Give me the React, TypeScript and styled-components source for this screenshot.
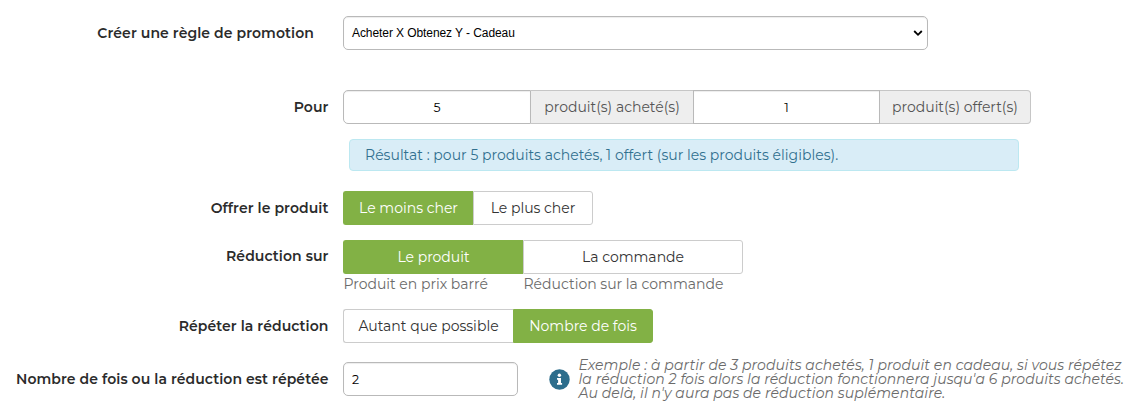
import React from 'react';
import styled, { createGlobalStyle, css } from 'styled-components';

const GlobalStyle = createGlobalStyle`
  *, *::before, *::after { box-sizing: border-box; }
  body {
    margin: 0;
    background: #fff;
    color: #333;
    font: 14px/20px Montserrat, Inter, sans-serif;
  }
`;

const Form = styled.form`
  display: flex;
  flex-direction: column;
  gap: 15px;
  width: 1134px;
  min-height: 411px;
  padding-top: 16px;
`;

const Row = styled.div<{ $after?: number }>`
  display: flex;
  align-items: flex-start;
  margin-bottom: ${(p) => p.$after ?? 0}px;
`;

const Label = styled.label<{ $inset?: number; $lift?: number }>`
  flex: none;
  width: 343px;
  padding: ${(p) => 7 - (p.$lift ?? 0)}px ${(p) => p.$inset ?? 14.5}px 0 0;
  color: #2b2b2b;
  font-weight: 600;
  letter-spacing: 0.08px;
  text-align: right;
  white-space: nowrap;
`;

const Line = styled.span`
  white-space: nowrap;
`;

const fieldFrame = css`
  height: 34px;
  border: 1px solid #b9b9b9;
  border-radius: 5px;
  background: #fff;
  color: #000;
  box-shadow: inset 0 1px 1px rgba(0, 0, 0, 0.075);
`;

const SelectBox = styled.div`
  ${fieldFrame}
  display: flex;
  align-items: center;
  justify-content: space-between;
  width: 585px;
  padding: 0 4px 1px 8px;
  font: 12px/16px 'Liberation Sans', Arial, sans-serif;
  letter-spacing: -0.08px;
`;

const Input = styled.input<{ $width: number; $joined?: 'left' | 'both' }>`
  ${fieldFrame}
  width: ${(p) => p.$width}px;
  padding: 1px 8px 0;
  font: 12.5px/18px Montserrat, Inter, sans-serif;
  outline: none;
  ${(p) => p.$joined && css`text-align: center; border-radius: ${p.$joined === 'left' ? '5px 0 0 5px' : '0'};`}
`;

const InputGroup = styled.div`
  display: flex;
  width: 688px;
`;

const Addon = styled.span<{ $width: number; $last?: boolean }>`
  display: flex;
  align-items: center;
  justify-content: center;
  width: ${(p) => p.$width}px;
  height: 34px;
  border: 1px solid #c6c6c6;
  border-width: ${(p) => (p.$last ? '1px 1px 1px 0' : '1px 0')};
  border-radius: ${(p) => (p.$last ? '0 4px 4px 0' : '0')};
  background: #eee;
  color: #555;
`;

const Alert = styled.div`
  display: flex;
  align-items: center;
  width: 670px;
  height: 32px;
  margin: 0 0 5px 349px;
  padding: 0 15px;
  border: 1px solid #bce8f1;
  border-radius: 4px;
  background: #d9edf7;
  color: #31708f;
  letter-spacing: 0.02px;
`;

const Toggle = styled.div`
  display: flex;
`;

const Option = styled.button<{ $width: number; $active?: boolean }>`
  width: ${(p) => p.$width}px;
  height: 34px;
  padding: 0;
  border: 1px solid ${(p) => (p.$active ? '#82b145' : '#ccc')};
  background: ${(p) => (p.$active ? '#82b145' : '#fff')};
  color: ${(p) => (p.$active ? '#fff' : '#333')};
  font: inherit;
  &:first-child { border-radius: 3px 0 0 3px; border-right-width: 0; }
  &:last-child { border-radius: 0 3px 3px 0; }
`;

const Hints = styled.div`
  display: grid;
  grid-template-columns: 180px 220px;
  padding-left: 0.5px;
  color: #6b6b6b;
`;

const Example = styled.div`
  display: flex;
  align-items: center;
  gap: 9px;
  height: 34px;
  margin-left: 30.5px;
`;

const ExampleText = styled.p`
  display: flex;
  flex-direction: column;
  margin: 0;
  color: #6b6b6b;
  font-style: italic;
  line-height: 14px;
  letter-spacing: 0.08px;
`;

const Chevron = () => (
  <svg width="10" height="8" viewBox="0 0 10 8" fill="none" stroke="#000" strokeWidth="1.8">
    <path d="M1.2 2 5 5.8 8.8 2" />
  </svg>
);

const InfoIcon = () => (
  <svg width="21" height="21" viewBox="0 0 21 21">
    <circle cx="10.5" cy="10.5" r="10.2" fill="#2c6d8c" />
    <circle cx="10.4" cy="6.2" r="1.7" fill="#fff" />
    <path d="M8 9h4v5h1.1v1.8H8V14h1.1v-3.2H8z" fill="#fff" />
  </svg>
);

export default function App() {
  return (
    <>
      <GlobalStyle />
      <Form>
        <Row $after={25}>
          <Label $inset={29}>Créer une règle de promotion</Label>
          <SelectBox>
            <Line>Acheter X Obtenez Y - Cadeau</Line>
            <Chevron />
          </SelectBox>
        </Row>
        <Row>
          <Label>Pour</Label>
          <InputGroup>
            <Input $width={188} $joined="left" defaultValue="5" />
            <Addon $width={162}><Line>produit(s) acheté(s)</Line></Addon>
            <Input $width={187} $joined="both" defaultValue="1" />
            <Addon $width={151} $last><Line>produit(s) offert(s)</Line></Addon>
          </InputGroup>
        </Row>
        <Alert>
          <Line>Résultat : pour 5 produits achetés, 1 offert (sur les produits éligibles).</Line>
        </Alert>
        <Row>
          <Label>Offrer le produit</Label>
          <Toggle>
            <Option type="button" $width={130} $active>Le moins cher</Option>
            <Option type="button" $width={120}>Le plus cher</Option>
          </Toggle>
        </Row>
        <Row>
          <Label $lift={1}>Réduction sur</Label>
          <div>
            <Toggle>
              <Option type="button" $width={180} $active>Le produit</Option>
              <Option type="button" $width={220}>La commande</Option>
            </Toggle>
            <Hints>
              <Line>Produit en prix barré</Line>
              <Line>Réduction sur la commande</Line>
            </Hints>
          </div>
        </Row>
        <Row $after={4}>
          <Label>Répéter la réduction</Label>
          <Toggle>
            <Option type="button" $width={170}>Autant que possible</Option>
            <Option type="button" $width={140} $active>Nombre de fois</Option>
          </Toggle>
        </Row>
        <Row>
          <Label>Nombre de fois ou la réduction est répétée</Label>
          <Input $width={175} defaultValue="2" />
          <Example>
            <InfoIcon />
            <ExampleText>
              <Line>Exemple : à partir de 3 produits achetés, 1 produit en cadeau, si vous répétez</Line>
              <Line>la réduction 2 fois alors la réduction fonctionnera jusqu'a 6 produits achetés.</Line>
              <Line>Au delà, il n'y aura pas de réduction suplémentaire.</Line>
            </ExampleText>
          </Example>
        </Row>
      </Form>
    </>
  );
}
